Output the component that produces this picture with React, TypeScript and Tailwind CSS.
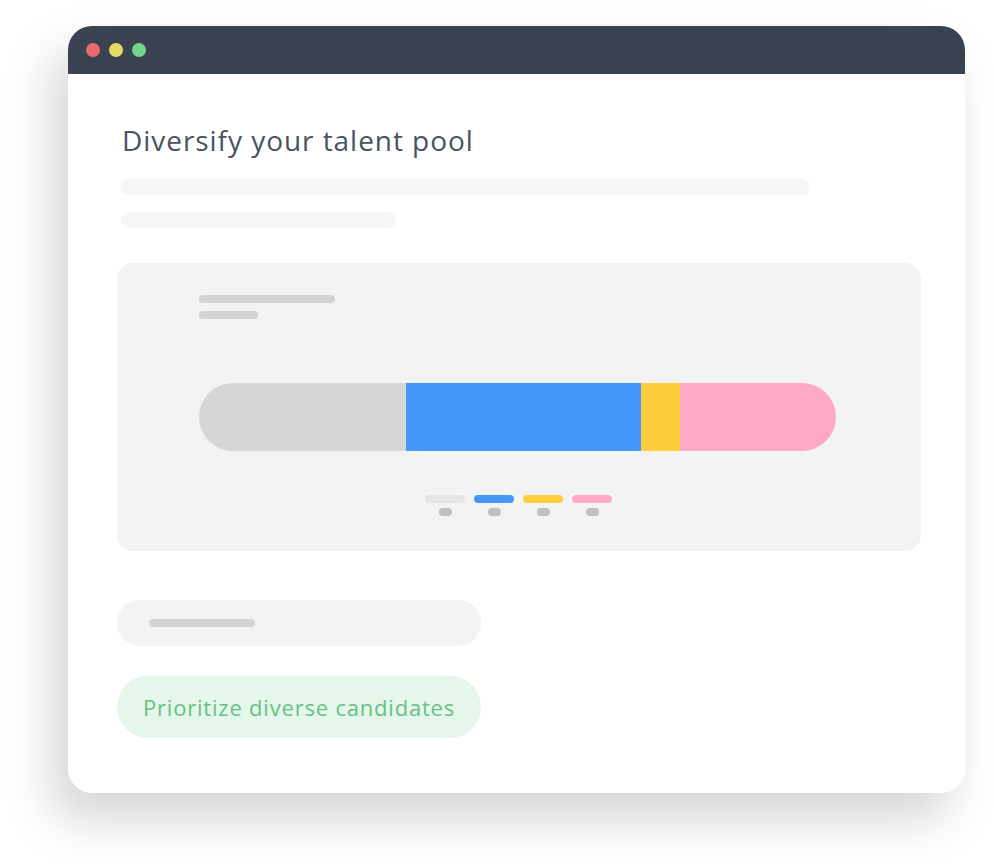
export default function App() {
  return (
    <div className="w-[994px] h-[864px] bg-white overflow-hidden pt-[26px] pl-[68px]" style={{ fontFamily: '"Open Sans", "Liberation Sans", sans-serif' }}>
      <div className="w-[897px] h-[767px] bg-white rounded-[24px] overflow-hidden flex flex-col shadow-[-16px_26px_50px_rgba(0,0,0,0.17)]">
        <div className="h-[48px] bg-[#3a4252] flex items-center gap-[9px] pl-[18px] shrink-0">
          <span className="w-[14px] h-[14px] rounded-full bg-[#e96b6b]" />
          <span className="w-[14px] h-[14px] rounded-full bg-[#e5d966]" />
          <span className="w-[14px] h-[14px] rounded-full bg-[#74d68c]" />
        </div>

        <div className="pl-[49px] pt-[48px]">
          <h1 className="pl-[5px] text-[28px] leading-[36px] text-[#4a5260] tracking-[0.95px]">Diversify your talent pool</h1>
          <div className="mt-[21px] ml-[4px] w-[689px] h-[16px] rounded-full bg-[#f6f6f6]" />
          <div className="mt-[17px] ml-[4px] w-[275px] h-[16px] rounded-full bg-[#f6f6f6]" />

          <div className="mt-[35px] w-[804px] h-[288px] rounded-[16px] bg-[#f3f3f3] pt-[32px] pl-[82px]">
            <div className="w-[136px] h-[8px] rounded-full bg-[#d3d3d3]" />
            <div className="mt-[8px] w-[59px] h-[8px] rounded-full bg-[#d3d3d3]" />

            <div className="mt-[64px] w-[637px] h-[68px] rounded-full overflow-hidden flex">
              <div className="w-[207px] bg-[#d6d6d6]" />
              <div className="w-[235px] bg-[#4697fa]" />
              <div className="w-[39px] bg-[#fecd3c]" />
              <div className="flex-1 bg-[#ffa9c9]" />
            </div>

            <div className="mt-[44px] ml-[226px] flex gap-[9px]">
              {['bg-[#e5e5e5]', 'bg-[#4697fa]', 'bg-[#fecd3c]', 'bg-[#ffa9c9]'].map((c) => (
                <div key={c} className="w-[40px] flex flex-col items-center gap-[5px]">
                  <div className={`w-[40px] h-[8px] rounded-full ${c}`} />
                  <div className="w-[13px] h-[8px] rounded-full bg-[#bfbfbf]" />
                </div>
              ))}
            </div>
          </div>

          <div className="mt-[49px] w-[364px] h-[46px] rounded-full bg-[#f3f3f3] flex items-center pl-[32px]">
            <div className="w-[106px] h-[8px] rounded-full bg-[#d3d3d3]" />
          </div>

          <button className="mt-[30px] w-[364px] h-[62px] rounded-full bg-[#e5f7eb] text-[#68c184] text-[22px] tracking-[0.8px]">
            Prioritize diverse candidates
          </button>
        </div>
      </div>
    </div>
  )
}
